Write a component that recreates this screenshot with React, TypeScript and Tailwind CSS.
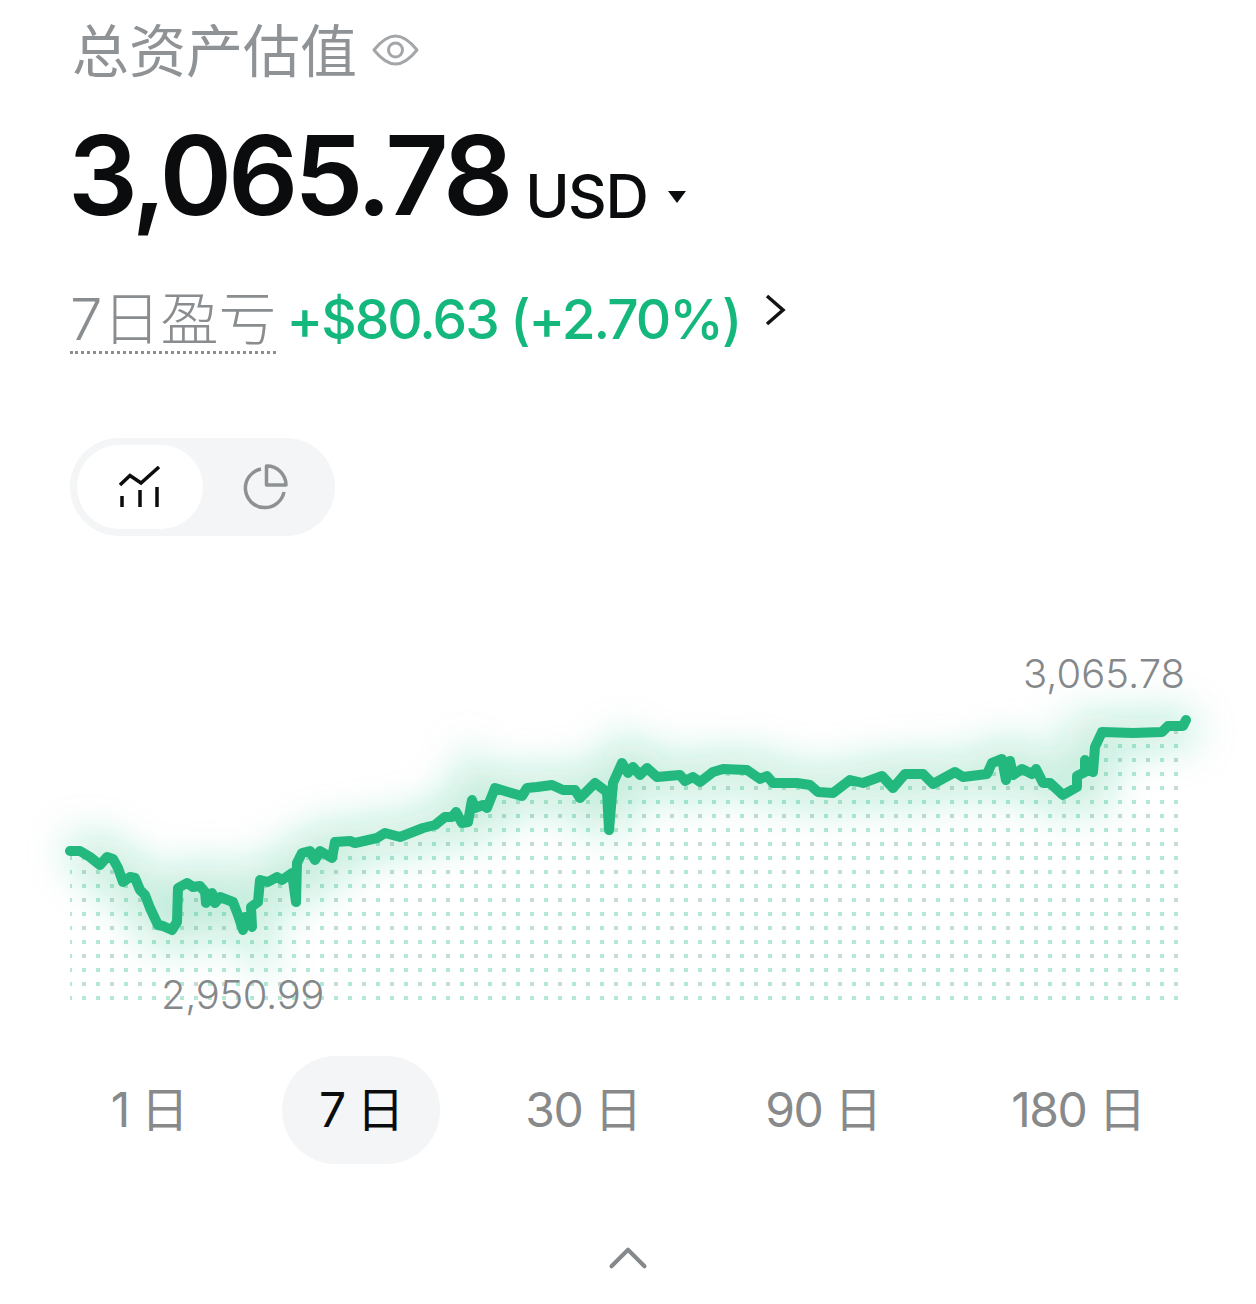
import React from 'react';
import { ChevronUp } from 'lucide-react';

const LINE =
  '70,851 80,851 90,857 100,865 107,857 113,859 118,868 123,882 130,877 135,878 140,890 145,895 150,908 158,925 163,926 172,930 177,922 178,888 187,883 193,887 200,886 205,892 206,903 212,893 215,903 220,897 233,902 238,915 243,930 245,917 252,927 251,907 258,902 260,880 268,882 277,877 282,880 292,873 296,902 297,863 302,853 310,851 315,860 320,851 332,858 335,842 350,841 355,843 377,838 385,833 400,837 423,828 435,825 445,817 452,817 456,812 462,823 468,822 472,800 475,808 483,805 487,808 495,788 508,792 522,796 527,788 537,787 552,785 563,790 575,790 580,798 595,783 607,792 609,830 613,783 622,763 628,773 633,767 640,775 647,768 657,777 680,775 685,781 693,777 700,782 713,772 723,769 747,770 760,779 767,776 773,783 797,783 810,785 818,792 833,793 850,780 863,783 882,776 893,788 905,774 923,774 933,784 955,772 963,777 987,774 992,763 1002,759 1006,780 1010,761 1013,775 1022,769 1032,774 1036,769 1043,783 1050,783 1063,795 1077,787 1077,776 1085,772 1085,760 1093,772 1095,747 1102,732 1133,733 1162,732 1168,726 1183,726 1186,720';

const TABS = [
  { label: '1 日', box: 'ml-[72px] w-[154px]' },
  { label: '7 日', box: 'ml-[56px] w-[158px] rounded-[54px] bg-[#f3f5f6] text-[#0b0c0d]' },
  { label: '30 日', box: 'ml-[54px] w-[178px]' },
  { label: '90 日', box: 'ml-[61px] w-[180px]' },
  { label: '180 日', box: 'ml-[63px] w-[204px]' },
];

const Chart: React.FC = () => (
  <div className="relative mt-[104px] h-[380px]">
    <svg className="block h-[380px] w-[1256px]" viewBox="0 640 1256 380" fill="none">
      <defs>
        <pattern id="dots" x="70" y="858" width="28" height="28" patternUnits="userSpaceOnUse">
          <rect x="-2" y="-2" width="4" height="4" fill="#b5e8d5" />
          <rect x="26" y="-2" width="4" height="4" fill="#b5e8d5" />
          <rect x="-2" y="26" width="4" height="4" fill="#b5e8d5" />
          <rect x="26" y="26" width="4" height="4" fill="#b5e8d5" />
          <rect x="12" y="-2" width="4" height="4" fill="#b5e8d5" />
          <rect x="12" y="26" width="4" height="4" fill="#b5e8d5" />
          <rect x="-2" y="12" width="4" height="4" fill="#b5e8d5" />
          <rect x="26" y="12" width="4" height="4" fill="#b5e8d5" />
          <rect x="12" y="12" width="4" height="4" fill="#c6dcd4" />
        </pattern>
        <clipPath id="under">
          <polygon points={`${LINE} 1178,720 1178,1001 70,1001`} />
        </clipPath>
        <filter id="glow" x="-10%" y="-80%" width="120%" height="260%">
          <feGaussianBlur stdDeviation="20" />
        </filter>
      </defs>
      <rect x="70" y="700" width="1110" height="301" fill="url(#dots)" clipPath="url(#under)" />
      <polyline points={LINE} stroke="#22b97c" strokeOpacity="0.28" strokeWidth="34" filter="url(#glow)" />
      <polyline points={LINE} stroke="#23b87e" strokeWidth="10" strokeLinejoin="round" strokeLinecap="round" />
    </svg>
    <span className="absolute right-[71px] top-[10px] text-[40px] leading-[48px] font-light text-[#85888b]">3,065.78</span>
    <span className="absolute left-[161px] top-[331px] text-[40px] leading-[48px] font-light tracking-[-0.4px] text-[#85888b]">2,950.99</span>
  </div>
);

const App: React.FC = () => {
  return (
    <div className="h-[1304px] w-[1256px] overflow-hidden bg-white font-['Inter','Noto_Sans_CJK_SC',sans-serif]">
      <div className="pl-[70px]">
        <div className="flex h-[100px] items-center pl-[2px] pt-[4px]">
          <span className="text-[57px] leading-[96px] font-normal text-[#8f9396]">总资产估值</span>
          <svg className="mb-[4px] ml-[15px]" width="47" height="34" viewBox="0 0 47 34" fill="none" stroke="#a4a7a9" strokeWidth="3">
            <path d="M2 17 C10 7 16 3 23.5 3 S37 7 45 17 C37 27 31 31 23.5 31 S10 27 2 17 Z" strokeLinejoin="round" />
            <circle cx="23.5" cy="17" r="7" />
          </svg>
        </div>
        <div className="mt-[10px] -ml-[2px] flex h-[130px] items-baseline">
          <span className="text-[110px] leading-[130px] font-semibold tracking-[-4.1px] text-[#0b0c0d]">3,065.78</span>
          <span className="ml-[16px] translate-y-[3px] text-[60px] leading-[130px] font-medium tracking-[-1.5px] text-[#0b0c0d]">USD</span>
          <svg className="ml-[20px] mt-[80px] self-start" width="20" height="14" viewBox="0 0 20 14">
            <path d="M1 1 H19 L10 13 Z" fill="#0b0c0d" />
          </svg>
        </div>
        <div className="mt-[47px] flex h-[67px] items-start">
          <span className="border-b-[3px] border-dotted border-[#8b8e90] text-[58px] leading-[64px] font-light text-[#8a8d8f]">7日盈亏</span>
          <span className="ml-[10px] text-[55px] leading-[64px] font-medium tracking-[-2px] text-[#14b77c]">+$80.63 (+2.70%)</span>
          <svg className="ml-[24px] mt-[7px]" width="22" height="32" viewBox="0 0 22 32" fill="none" stroke="#111315" strokeWidth="3.5">
            <path d="M3 2 L19 16 L3 30" />
          </svg>
        </div>
        <div className="mt-[84px] flex h-[98px] w-[265px] items-center rounded-full bg-[#f3f5f6] p-[7px]">
          <div className="flex h-[84px] w-[126px] items-center justify-center rounded-full bg-white">
            <svg width="42" height="42" viewBox="0 0 42 42" fill="none" stroke="#0b0c0d" strokeWidth="3.5">
              <path d="M1 19 L11 9.5 L22 17 L40 1" />
              <path d="M3 30 V41 M21 24 V41 M38 21 V41" />
            </svg>
          </div>
          <div className="flex flex-1 items-center justify-center pr-[1px]">
            <svg width="46" height="46" viewBox="0 0 46 46" fill="none" stroke="#8e9193" strokeWidth="3.5">
              <path d="M19 5 A19.5 19.5 0 1 0 42 28" />
              <path d="M24.5 2 A19 19 0 0 1 44 21 H24.5 Z" strokeLinejoin="round" />
            </svg>
          </div>
        </div>
      </div>
      <Chart />
      <div className="mt-[36px] flex text-[#88898b]">
        {TABS.map((tab) => (
          <div key={tab.label} className={`flex h-[108px] items-center justify-center text-[48px] font-normal tracking-[-1.5px] ${tab.box}`}>
            {tab.label}
          </div>
        ))}
      </div>
      <div className="mt-[61px] flex justify-center">
        <ChevronUp className="text-[#86898b]" size={66} strokeWidth={1.5} />
      </div>
    </div>
  );
};

export default App;
